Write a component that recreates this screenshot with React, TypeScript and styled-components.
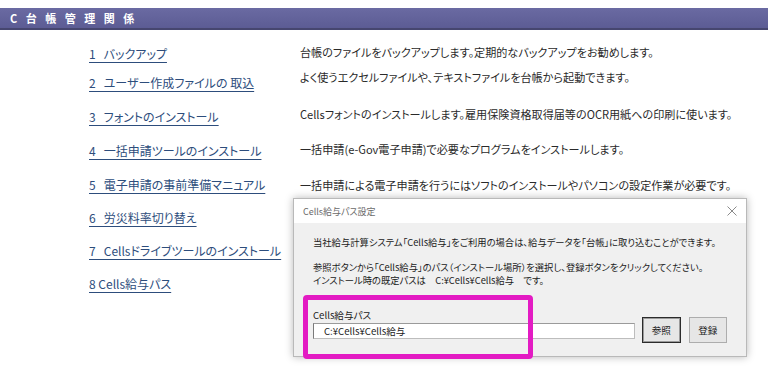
import styled, { createGlobalStyle } from 'styled-components';

const GlobalStyle = createGlobalStyle`
  html, body {
    margin: 0;
    padding: 0;
    background: #ffffff;
  }
  body {
    font-family: 'Noto Sans CJK JP', 'Noto Sans', sans-serif;
    font-feature-settings: 'palt';
  }
`;

const Page = styled.div`
  position: relative;
  width: 768px;
  height: 376px;
  padding-top: 8px;
  box-sizing: border-box;
  overflow: hidden;
`;

const HeaderBar = styled.div`
  height: 20px;
  background: linear-gradient(#6a6aa2, #5c5c94);
  border-bottom: 2px solid #46466f;
  display: flex;
  align-items: center;
  padding-left: 10px;
`;

const HeaderTitle = styled.h1`
  margin: 0;
  color: #ffffff;
  font-size: 11px;
  font-weight: 700;
  letter-spacing: 8.5px;
  line-height: 1;
`;

const MenuList = styled.div`
  display: flex;
  flex-direction: column;
  padding-left: 89px;
`;

const MenuRow = styled.div<{ $space: number }>`
  display: grid;
  grid-template-columns: 211px 1fr;
  align-items: start;
  margin-top: ${(p) => p.$space}px;
  height: 16px;
`;

const LinkCell = styled.div`
  font-size: 12px;
  line-height: 16px;
  height: 16px;
`;

const MenuLink = styled.a`
  color: #2d4d7c;
  text-decoration: underline;
  text-underline-offset: 3px;
  white-space: pre;
  cursor: pointer;
`;

const Description = styled.span<{ $lift: number }>`
  color: #2a2a2a;
  font-size: 11.1px;
  line-height: 16px;
  margin-top: ${(p) => -p.$lift}px;
  white-space: nowrap;
`;

const Dialog = styled.div`
  position: absolute;
  left: 293px;
  top: 198px;
  width: 454px;
  height: 159px;
  background: #f0f0f0;
  border: 1px solid #b9b9b9;
  box-sizing: border-box;
  box-shadow: 0 0 8px rgba(0, 0, 0, 0.28);
  display: flex;
  flex-direction: column;
`;

const TitleBar = styled.div`
  height: 24px;
  background: #ffffff;
  display: flex;
  align-items: center;
  justify-content: space-between;
  padding: 0 8px 0 9px;
`;

const TitleText = styled.span`
  color: #6a6a6a;
  font-size: 9px;
`;

const CloseIcon = styled.svg`
  width: 10px;
  height: 10px;
  margin-right: 1px;
`;

const DialogBody = styled.div`
  flex: 1;
  padding: 13px 19px 0 19px;
  display: flex;
  flex-direction: column;
`;

const Message = styled.p<{ $gap: number }>`
  margin: ${(p) => p.$gap}px 0 0 0;
  color: #1a1a1a;
  font-size: 9.3px;
  line-height: 13px;
  white-space: pre;
`;

const PathArea = styled.div`
  display: flex;
  align-items: flex-end;
  margin-top: 22px;
`;

const FieldGroup = styled.div`
  display: flex;
  flex-direction: column;
  margin-bottom: 4px;
`;

const FieldLabel = styled.label`
  color: #1a1a1a;
  font-size: 9.6px;
  line-height: 12px;
  margin-bottom: 2px;
`;

const PathInput = styled.div`
  width: 322px;
  height: 16px;
  box-sizing: border-box;
  background: #ffffff;
  border: 1px solid #bdbdbd;
  border-left-color: #7a7a7a;
  border-top-color: #9a9a9a;
  padding-left: 10px;
  font-size: 9.6px;
  line-height: 14px;
  color: #1a1a1a;
`;

const DialogButton = styled.button<{ $primary?: boolean }>`
  width: 39px;
  height: 26px;
  margin-left: ${(p) => (p.$primary ? 7 : 8)}px;
  background: #e6e6e6;
  border: 1px solid ${(p) => (p.$primary ? '#2b2b2b' : '#adadad')};
  box-shadow: ${(p) => (p.$primary ? 'inset 0 0 0 1px #9a9a9a' : 'none')};
  font-family: inherit;
  font-size: 9.6px;
  color: #1a1a1a;
  padding: 0;
`;

const Highlight = styled.div`
  position: absolute;
  left: 303px;
  top: 295px;
  width: 230px;
  height: 64px;
  box-sizing: border-box;
  border: 5px solid #e31bc3;
  border-radius: 4px;
  pointer-events: none;
`;

const menuItems = [
  { label: '1   バックアップ', desc: '台帳のファイルをバックアップします。定期的なバックアップをお勧めします。', space: 16, lift: 2 },
  { label: '2   ユーザー作成ファイルの 取込', desc: 'よく使うエクセルファイルや、テキストファイルを台帳から起動できます。', space: 13, lift: 6 },
  { label: '3   フォントのインストール', desc: 'Cellsフォントのインストールします。雇用保険資格取得届等のOCR用紙への印刷に使います。', space: 18, lift: 3 },
  { label: '4   一括申請ツールのインストール', desc: '一括申請(e-Gov電子申請)で必要なプログラムをインストールします。', space: 18, lift: 2 },
  { label: '5   電子申請の事前準備マニュアル', desc: '一括申請による電子申請を行うにはソフトのインストールやパソコンの設定作業が必要です。', space: 18, lift: 0 },
  { label: '6   労災料率切り替え', desc: '', space: 17, lift: 0 },
  { label: '7   Cellsドライブツールのインストール', desc: '', space: 17, lift: 0 },
  { label: '8 Cells給与パス', desc: '', space: 17, lift: 0 },
];

function App() {
  return (
    <>
      <GlobalStyle />
      <Page>
        <HeaderBar>
          <HeaderTitle>C台帳管理関係</HeaderTitle>
        </HeaderBar>

        <MenuList>
          {menuItems.map((item) => (
            <MenuRow key={item.label} $space={item.space}>
              <LinkCell>
                <MenuLink>{item.label}</MenuLink>
              </LinkCell>
              <Description $lift={item.lift}>{item.desc}</Description>
            </MenuRow>
          ))}
        </MenuList>

        <Dialog>
          <TitleBar>
            <TitleText>Cells給与パス設定</TitleText>
            <CloseIcon viewBox="0 0 10 10">
              <path d="M0.5 0.5 L9.5 9.5 M9.5 0.5 L0.5 9.5" stroke="#8a8a8a" strokeWidth="1" fill="none" />
            </CloseIcon>
          </TitleBar>
          <DialogBody>
            <Message $gap={0}>当社給与計算システム「Cells給与」をご利用の場合は、給与データを「台帳」に取り込むことができます。</Message>
            <Message $gap={12}>参照ボタンから「Cells給与」のパス（インストール場所）を選択し、登録ボタンをクリックしてください。</Message>
            <Message $gap={0}>インストール時の既定パスは　C:¥Cells¥Cells給与　です。</Message>
            <PathArea>
              <FieldGroup>
                <FieldLabel>Cells給与パス</FieldLabel>
                <PathInput>C:¥Cells¥Cells給与</PathInput>
              </FieldGroup>
              <DialogButton $primary>参照</DialogButton>
              <DialogButton>登録</DialogButton>
            </PathArea>
          </DialogBody>
        </Dialog>

        <Highlight />
      </Page>
    </>
  );
}

export default App;
